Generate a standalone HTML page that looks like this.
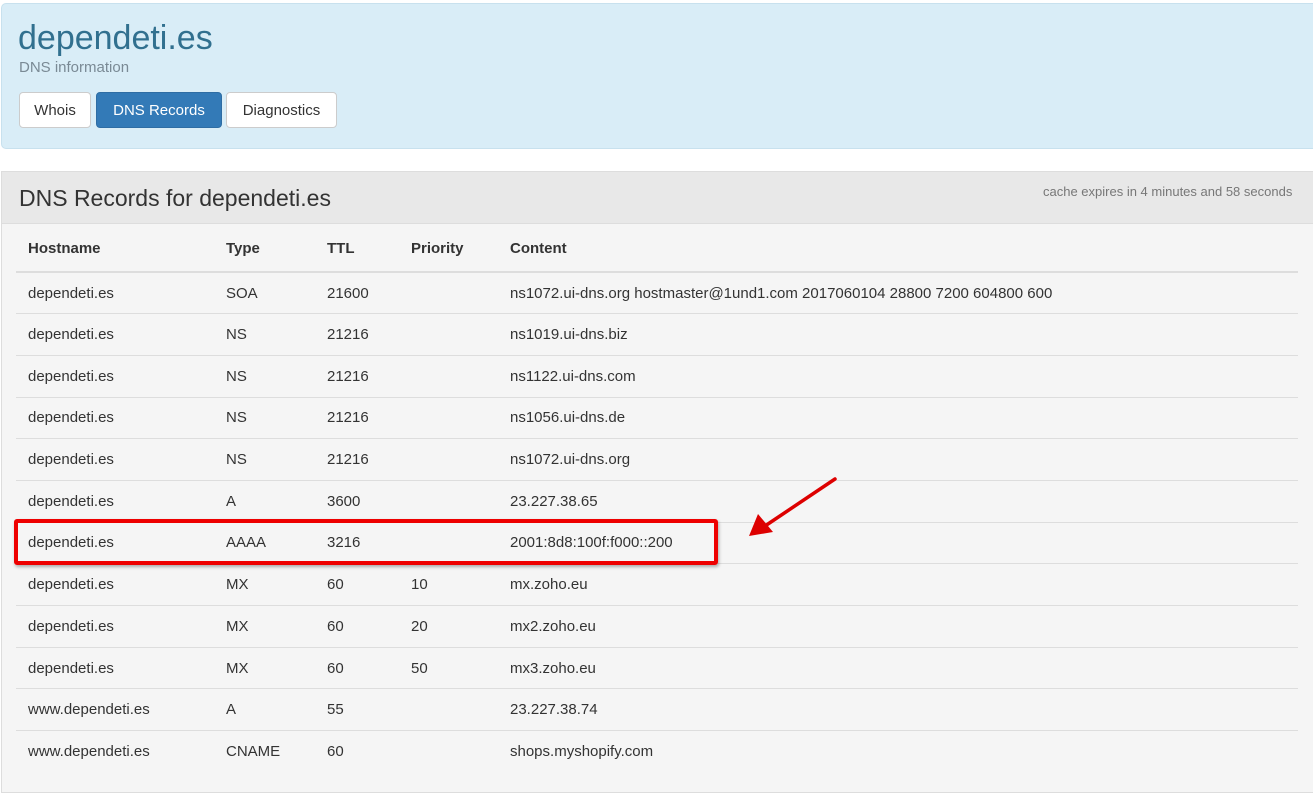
<!DOCTYPE html>
<html><head><style>
body{margin:0;width:1313px;height:777px;overflow:hidden;background:#fff;font-family:"Liberation Sans",sans-serif;color:#333;position:relative}
.jumbo{position:absolute;left:1px;top:3px;width:1320px;height:144px;background:#d9edf7;border:1px solid #c8e1ee;border-radius:5px}
h1{position:absolute;left:18px;top:19px;margin:0;font-size:34px;font-weight:normal;color:#31708f}
.sub{position:absolute;left:19px;top:59px;font-size:15px;color:#7a8a95}
.btn{position:absolute;top:92px;height:36px;line-height:35px;font-size:15px;background:#fff;border:1px solid #ccc;border-radius:4px;text-align:center;box-sizing:border-box;color:#333}
.btn.a{background:#337ab7;border-color:#2e6da4;color:#fff}
.panel{position:absolute;left:1px;top:171px;width:1320px;height:620px;background:#f5f5f5;border:1px solid #ddd}
.ph{height:51px;background:#e8e8e8;border-bottom:1px solid #ddd;position:relative}
.ph .t{position:absolute;left:17px;top:13px;font-size:23px;color:#333}
.ph .c{position:absolute;left:1041px;top:12px;font-size:13px;color:#777}
table{position:absolute;left:16px;top:224px;width:1282px;border-collapse:collapse;font-size:15px}
td,th{text-align:left;padding:0 0 0 12px;border-top:1px solid #ddd;box-sizing:border-box}
td{height:41.7px}
th{border-top:none;border-bottom:2px solid #ddd;height:48px;font-weight:bold;vertical-align:bottom;padding-bottom:14px}
.box{position:absolute;left:14px;top:519px;width:696px;height:38px;border:4px solid #e00;border-radius:3px;box-shadow:1px 2px 3px rgba(0,0,0,.3)}
</style></head><body>
<div class="jumbo"></div>
<h1>dependeti.es</h1>
<div class="sub">DNS information</div>
<div class="btn" style="left:19px;width:72px">Whois</div>
<div class="btn a" style="left:96px;width:126px">DNS Records</div>
<div class="btn" style="left:226px;width:111px">Diagnostics</div>
<div class="panel"><div class="ph"><div class="t">DNS Records for dependeti.es</div><div class="c">cache expires in 4 minutes and 58 seconds</div></div></div>
<table>
<colgroup><col style="width:198px"><col style="width:101px"><col style="width:84px"><col style="width:99px"><col></colgroup>
<tr><th>Hostname</th><th>Type</th><th>TTL</th><th>Priority</th><th>Content</th></tr>
<tr><td>dependeti.es</td><td>SOA</td><td>21600</td><td></td><td>ns1072.ui-dns.org hostmaster@1und1.com 2017060104 28800 7200 604800 600</td></tr>
<tr><td>dependeti.es</td><td>NS</td><td>21216</td><td></td><td>ns1019.ui-dns.biz</td></tr>
<tr><td>dependeti.es</td><td>NS</td><td>21216</td><td></td><td>ns1122.ui-dns.com</td></tr>
<tr><td>dependeti.es</td><td>NS</td><td>21216</td><td></td><td>ns1056.ui-dns.de</td></tr>
<tr><td>dependeti.es</td><td>NS</td><td>21216</td><td></td><td>ns1072.ui-dns.org</td></tr>
<tr><td>dependeti.es</td><td>A</td><td>3600</td><td></td><td>23.227.38.65</td></tr>
<tr><td>dependeti.es</td><td>AAAA</td><td>3216</td><td></td><td>2001:8d8:100f:f000::200</td></tr>
<tr><td>dependeti.es</td><td>MX</td><td>60</td><td>10</td><td>mx.zoho.eu</td></tr>
<tr><td>dependeti.es</td><td>MX</td><td>60</td><td>20</td><td>mx2.zoho.eu</td></tr>
<tr><td>dependeti.es</td><td>MX</td><td>60</td><td>50</td><td>mx3.zoho.eu</td></tr>
<tr><td>www.dependeti.es</td><td>A</td><td>55</td><td></td><td>23.227.38.74</td></tr>
<tr><td>www.dependeti.es</td><td>CNAME</td><td>60</td><td></td><td>shops.myshopify.com</td></tr>
</table>
<div class="box"></div>
<svg style="position:absolute;left:0;top:0" width="1313" height="777">
<line x1="835" y1="479" x2="765" y2="526" stroke="#d00" stroke-width="3.5" stroke-linecap="round"/>
<polygon points="749,536 758,514 773,532" fill="#d00"/>
</svg>
</body></html>
